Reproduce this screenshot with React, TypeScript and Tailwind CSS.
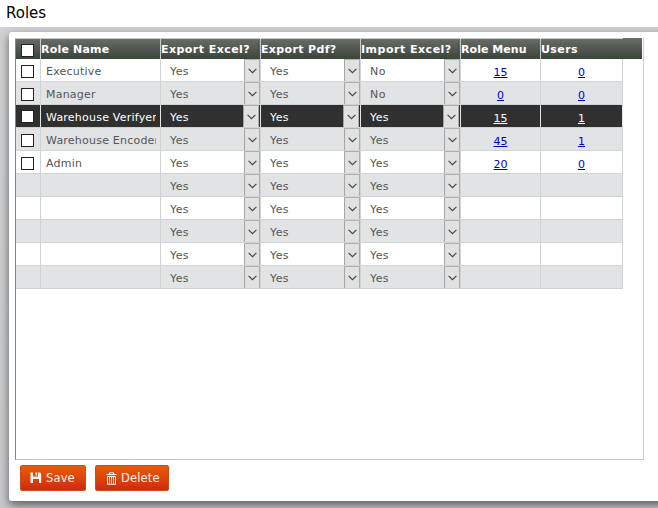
import React from 'react';

type Row = { name?: string; excel: string; pdf: string; imp: string; menu?: string; users?: string };

const blank: Row = { excel: 'Yes', pdf: 'Yes', imp: 'Yes' };
const rows: Row[] = [
  { name: 'Executive', excel: 'Yes', pdf: 'Yes', imp: 'No', menu: '15', users: '0' },
  { name: 'Manager', excel: 'Yes', pdf: 'Yes', imp: 'No', menu: '0', users: '0' },
  { name: 'Warehouse Verifyer', excel: 'Yes', pdf: 'Yes', imp: 'Yes', menu: '15', users: '1' },
  { name: 'Warehouse Encoder', excel: 'Yes', pdf: 'Yes', imp: 'Yes', menu: '45', users: '1' },
  { name: 'Admin', excel: 'Yes', pdf: 'Yes', imp: 'Yes', menu: '20', users: '0' },
  blank, blank, blank, blank, blank,
];
const SELECTED = 2;

function Box() {
  return <span className="block h-[13px] w-[13px] border border-[#222] bg-white" />;
}

function SelectCell({ value, selected }: { value: string; selected: boolean }) {
  return (
    <div className={`flex h-full justify-between pl-[9px] ${selected ? 'w-[98px]' : 'w-[99px]'}`}>
      <span className="leading-[26px] tracking-[0.4px]">{value}</span>
      <span className="flex h-[22px] w-[16px] items-center justify-center border-l border-r border-t border-l-[#a5a5a5] border-r-[#adadad] border-t-[#b0b0b0] bg-[#e1e1e1] pt-px">
        <svg width="9" height="6" viewBox="0 0 9 6" fill="none" stroke="#444" strokeWidth="1.15">
          <path d="M.6 .8 4.5 4.7 8.4 .8" />
        </svg>
      </span>
    </div>
  );
}

function Count({ value, selected }: { value?: string; selected: boolean }) {
  if (!value) return null;
  return (
    <a className={`block pt-[2px] text-center leading-[23px] underline ${selected ? 'text-white' : 'text-[#0000cc]'}`}>{value}</a>
  );
}

const cols = 'grid grid-cols-[25px_120px_100px_100px_100px_80px_82px]';
const head = 'border-r border-[#c9cdca] pt-px leading-[20px] whitespace-nowrap';

export default function App() {
  return (
    <div className="h-[508px] w-[658px] overflow-hidden bg-[#c5c6c8] font-['DejaVu_Sans','Verdana',sans-serif] text-[11px] text-[#555]">
      <h1 className="h-[27px] bg-white pl-[6px] text-[15px] leading-[26px] text-black">Roles</h1>
      <div className="h-[481px] overflow-hidden bg-linear-to-b from-[#d0d1d3] to-[#c8c9cb] pl-[9px] pt-[5px]">
        <main className="h-[469px] w-[670px] rounded-[3px] bg-white pl-[6px] pt-[6px] shadow-[0_4px_10px_0_rgba(0,0,0,0.55)]">
          <section className="h-[422px] w-[629px] border border-l-[#858585] border-r-[#cdcfcf] border-b-[#c3c5c5] border-t-transparent">
            <div className="-mt-px h-[21px] w-[626px] bg-linear-to-b from-[#6a6e69] to-[#3b443b]">
              <div className={`${cols} h-[21px] w-[607px] border-t border-[#c9cdca] font-bold text-white`}>
                <div className={`${head} flex items-center pl-[5px]`}><Box /></div>
                <div className={`${head} tracking-[0.2px]`}>Role Name</div>
                <div className={`${head} tracking-[0.45px]`}>Export Excel?</div>
                <div className={`${head} tracking-[0.35px]`}>Export Pdf?</div>
                <div className={`${head} tracking-[0.5px]`}>Import Excel?</div>
                <div className={`${head} tracking-[0.05px]`}>Role Menu</div>
                <div className="pt-px leading-[20px] tracking-[0.4px]">Users</div>
              </div>
            </div>
            {rows.map((row, i) => {
              const selected = i === SELECTED;
              const tone = selected ? 'bg-[#303030] text-white' : i % 2 ? 'bg-[#e2e3e5]' : 'bg-white';
              const cell = `h-[22px] overflow-hidden border-r ${selected ? 'border-[#e4e6e6]' : 'border-[#d0d3d3]'}`;
              return (
                <div key={i} className={`${cols} ${tone} h-[23px] w-[607px] border-b border-b-[#d0d3d3]`}>
                  <div className={`${cell} pl-[5px] ${selected ? 'pt-[5px]' : 'pt-[6px]'}`}>{row.name && <Box />}</div>
                  <div className={`${cell} pl-[5px] pr-[4px]`}>
                    <div className="overflow-hidden whitespace-nowrap leading-[26px] tracking-[0.22px]">{row.name}</div>
                  </div>
                  <div className={cell}><SelectCell value={row.excel} selected={selected} /></div>
                  <div className={cell}><SelectCell value={row.pdf} selected={selected} /></div>
                  <div className={cell}><SelectCell value={row.imp} selected={selected} /></div>
                  <div className={cell}><Count value={row.menu} selected={selected} /></div>
                  <div className={cell}><Count value={row.users} selected={selected} /></div>
                </div>
              );
            })}
          </section>
          <div className="flex gap-[9px] pl-[5px] pt-[5px] text-[11.5px] tracking-[0.15px] text-[#fef4e9]">
            <button className="flex h-[26px] w-[66px] items-center gap-[4px] rounded-[2px] border border-[#d24a1c] bg-linear-to-b from-[#e65c08] to-[#cf2810] pl-[9px]">
              <svg width="12" height="12" viewBox="0 0 12 12" fill="currentColor">
                <path fillRule="evenodd" d="M.5 .5h2.5V4.5H8V.5h2l1.200 1.200V11H9V7H3v4H.5zM5.500 .5H7.200V3.500H5.500z" />
              </svg>
              <span className="pt-[2px] leading-none">Save</span>
            </button>
            <button className="flex h-[26px] w-[74px] items-center gap-[4px] rounded-[2px] border border-[#d24a1c] bg-linear-to-b from-[#e65c08] to-[#cf2810] pl-[10px]">
              <svg width="11" height="13" viewBox="0 0 11 13" fill="none" stroke="currentColor">
                <path d="M.5 2.5h10M3.5 2V.7h4V2M1.5 4.5h8v7.8h-8z" />
                <path d="M3.5 5v7M5.5 5v7M7.5 5v7" strokeOpacity=".8" />
              </svg>
              <span className="pt-[2px] leading-none">Delete</span>
            </button>
          </div>
        </main>
      </div>
    </div>
  );
}
